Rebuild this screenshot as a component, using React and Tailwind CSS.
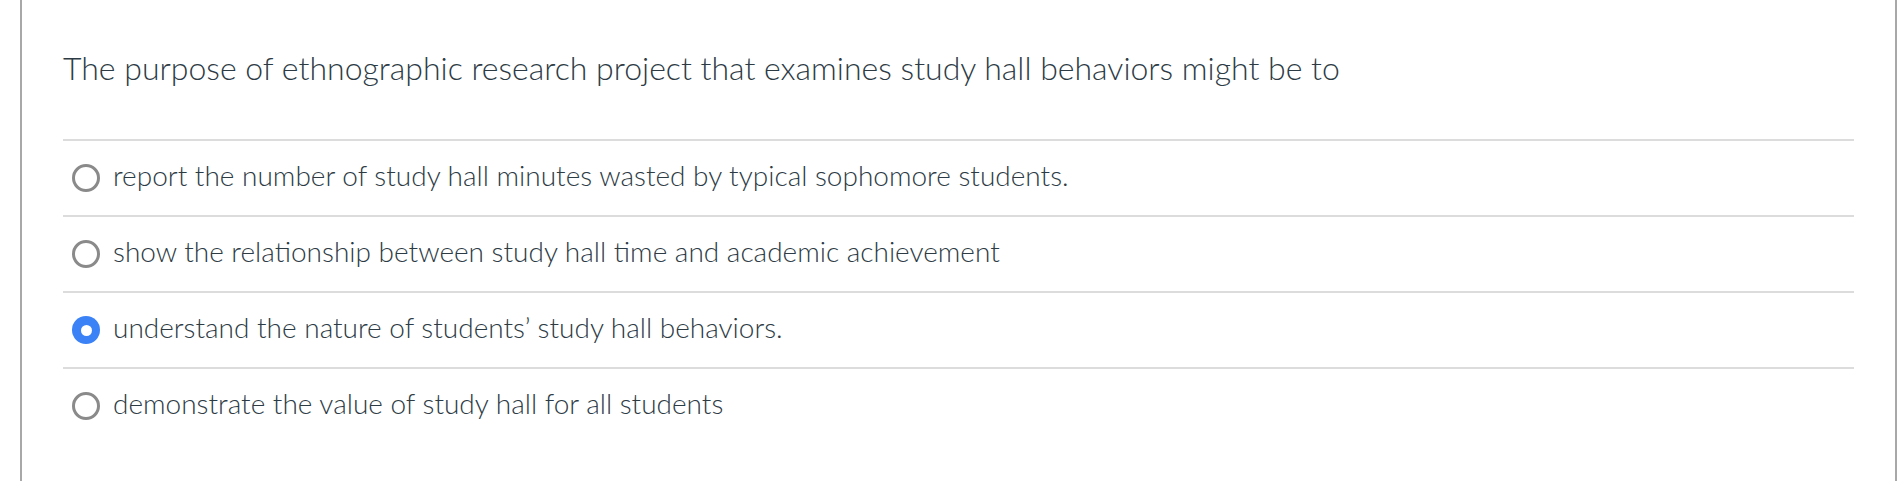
import React from 'react';

const answers = [
  { id: 'a', text: 'report the number of study hall minutes wasted by typical sophomore students.' },
  { id: 'b', text: 'show the relationship between study hall time and academic achievement' },
  { id: 'c', text: 'understand the nature of students\u2019 study hall behaviors.', selected: true },
  { id: 'd', text: 'demonstrate the value of study hall for all students' },
];

const Radio = ({ selected }) => {
  if (selected) {
    return (
      <span className="flex h-[28px] w-[28px] shrink-0 items-center justify-center rounded-full bg-[#3a82f6]">
        <span className="h-[11px] w-[11px] rounded-full bg-white" />
      </span>
    );
  }
  return <span className="h-[28px] w-[28px] shrink-0 rounded-full border-[3px] border-[#8a8a8a] bg-white" />;
};

const AnswerRow = ({ answer }) => (
  <div className="flex h-[76px] items-center gap-[13px] border-t-2 border-[#dcdcdc] pl-[9px]">
    <Radio selected={answer.selected} />
    <span className="pb-[7px] text-[28px] font-light leading-none text-[#2d3b45]">{answer.text}</span>
  </div>
);

export default function App() {
  return (
    <div className="h-[481px] w-full bg-white" style={{ fontFamily: 'Lato, "Open Sans", sans-serif' }}>
      <div className="ml-[20px] mr-[2px] h-full border-x-2 border-[#a8a8a8] px-[41px]">
        <div className="flex h-[139px] items-center pb-[4px]">
          <p className="text-[32px] font-light leading-none text-[#2d3b45]">
            The purpose of ethnographic research project that examines study hall behaviors might be to
          </p>
        </div>
        {answers.map(a => (
          <AnswerRow key={a.id} answer={a} />
        ))}
      </div>
    </div>
  );
}
